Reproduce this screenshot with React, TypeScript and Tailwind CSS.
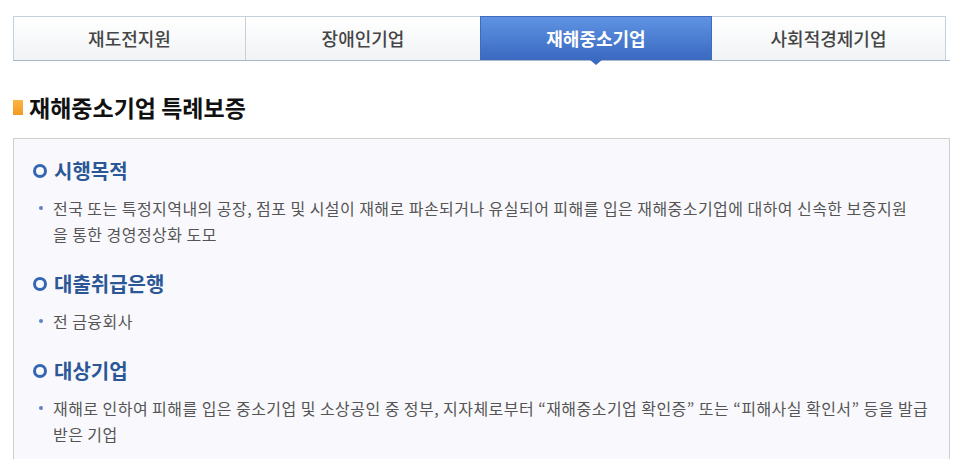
import React from "react";

const tabs = ["재도전지원", "장애인기업", "재해중소기업", "사회적경제기업"];
const widths = ["w-[233px]", "w-[234px]", "w-[232px]", "w-[234px]"];

function Ring() {
  return (
    <span className="inline-block w-[14px] h-[14px] rounded-full border-[3px] border-[#3566b3] shrink-0" />
  );
}

function Section({ title, lines }: { title: string; lines: string[] }) {
  return (
    <div>
      <div className="flex items-center gap-[7px] pl-[19px] h-[24px]">
        <Ring />
        <span className="text-[20px] font-bold text-[#2c5796] leading-none">{title}</span>
      </div>
      <div className="mt-[12px] flex pl-[25px]">
        <span className="w-[4px] h-[4px] rounded-full bg-[#5a86c8] mt-[11px] mr-[10px] shrink-0" />
        <div className="text-[16px] text-[#555] leading-[26px] tracking-[0.45px]">
          {lines.map((l, i) => (
            <div key={i} className="whitespace-nowrap">{l}</div>
          ))}
        </div>
      </div>
    </div>
  );
}

export default function App() {
  return (
    <div
      className="w-[965px] h-[459px] bg-white overflow-hidden"
      style={{ fontFamily: '"Noto Sans CJK KR", "Noto Sans", sans-serif' }}
    >
      <div className="pt-[16px] pl-[13px] w-[950px]">
        <div className="flex border-b border-[#a9b9ca] h-[45px]">
          {tabs.map((t, i) =>
            i === 2 ? (
              <div
                key={t}
                className={`relative ${widths[i]} h-[44px] flex items-center justify-center bg-gradient-to-b from-[#5f93e2] to-[#3a6ac2] text-white text-[18px] font-bold border border-[#3e6bbd]`}
              >
                {t}
                <span className="absolute left-1/2 -translate-x-1/2 top-full w-0 h-0 border-l-[7px] border-r-[7px] border-t-[6px] border-l-transparent border-r-transparent border-t-[#3a6ac2]" />
              </div>
            ) : (
              <div
                key={t}
                className={`${widths[i]} h-[44px] flex items-center justify-center bg-gradient-to-b from-white to-[#f1f3f5] text-[#454545] text-[18px] font-medium border-t border-[#c4d0dc] ${
                  i === 0 ? "border-l border-r" : ""
                } ${i === 3 ? "border-r" : ""}`}
              >
                {t}
              </div>
            )
          )}
        </div>
      </div>

      <div className="mt-[34px] pl-[13px] flex items-center gap-[6px] h-[24px]">
        <span className="w-[10px] h-[15px] bg-gradient-to-b from-[#fbb443] to-[#f39a1f]" />
        <span className="text-[23px] font-bold text-[#111] leading-none">
          재해중소기업 특례보증
        </span>
      </div>

      <div className="mt-[19px] ml-[13px] w-[937px] h-[400px] border border-[#cfcfcf] bg-[#f9f9fd] pt-[20px]">
        <div className="flex flex-col gap-[25px]">
          <Section
            title="시행목적"
            lines={[
              "전국 또는 특정지역내의 공장, 점포 및 시설이 재해로 파손되거나 유실되어 피해를 입은 재해중소기업에 대하여 신속한 보증지원",
              "을 통한 경영정상화 도모",
            ]}
          />
          <Section title="대출취급은행" lines={["전 금융회사"]} />
          <Section
            title="대상기업"
            lines={[
              "재해로 인하여 피해를 입은 중소기업 및 소상공인 중 정부, 지자체로부터 “재해중소기업 확인증” 또는 “피해사실 확인서” 등을 발급",
              "받은 기업",
            ]}
          />
        </div>
      </div>
    </div>
  );
}
